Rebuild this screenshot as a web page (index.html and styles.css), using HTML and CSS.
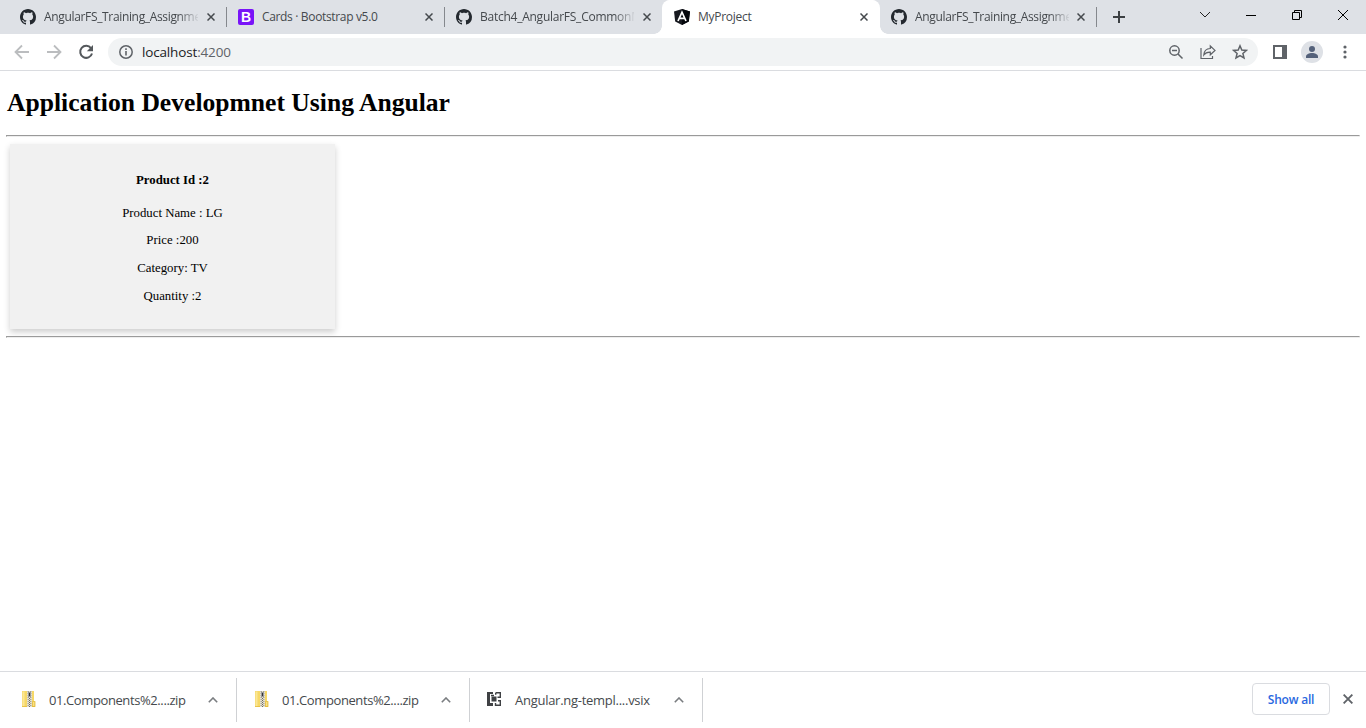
FILE: index.html
```html
<!DOCTYPE html>
<html lang="en">
<head>
<meta charset="utf-8">
<title>MyProject</title>
<link rel="stylesheet" href="styles.css">
</head>
<body>
<svg class="defs" width="0" height="0">
  <symbol id="github" viewBox="0 0 16 16"><path fill="#24292f" d="M8 0C3.58 0 0 3.58 0 8c0 3.54 2.29 6.53 5.47 7.59.4.07.55-.17.55-.38 0-.19-.01-.82-.01-1.49-2.01.37-2.53-.49-2.69-.94-.09-.23-.48-.94-.82-1.13-.28-.15-.68-.52-.01-.53.63-.01 1.08.58 1.23.82.72 1.21 1.87.87 2.33.66.07-.52.28-.87.51-1.07-1.78-.2-3.64-.89-3.64-3.95 0-.87.31-1.59.82-2.15-.08-.2-.36-1.02.08-2.12 0 0 .67-.21 2.2.82.64-.18 1.32-.27 2-.27s1.36.09 2 .27c1.53-1.04 2.2-.82 2.2-.82.44 1.1.16 1.92.08 2.12.51.56.82 1.27.82 2.15 0 3.07-1.87 3.75-3.65 3.95.29.25.54.73.54 1.48 0 1.07-.01 1.93-.01 2.2 0 .21.15.46.55.38A8.01 8.01 0 0 0 16 8c0-4.42-3.58-8-8-8z"/></symbol>
  <symbol id="close" viewBox="0 0 8 8"><path d="M.5.5l7 7M7.5.5l-7 7" fill="none" stroke="currentColor" stroke-width="1.5"/></symbol>
  <symbol id="caret" viewBox="0 0 10 6"><path d="M.8 5.2L5 1l4.200 4.200" fill="none" stroke="#7a7d80" stroke-width="1.6"/></symbol>
  <symbol id="zip" viewBox="0 0 14 16">
    <path d="M0 0h12v10h1.300v6H0z" fill="#f6d867"/><path d="M.5.5h2v15h-2z" fill="#fbe695"/>
    <path d="M10.500 10.500h2.300v5h-2.300z" fill="#fbe183" stroke="#e0b93e" stroke-width=".7"/>
    <path d="M0 15.600h13" stroke="#e2b93b" stroke-width=".8"/>
    <path d="M5 0h5v16H5z" fill="#e7e2cf"/><path d="M6.200 0v16M8.800 0v16" stroke="#8b897f" stroke-width="1" stroke-dasharray="1 1"/>
    <path d="M6 1h3v5H6z" fill="#9a9a9a"/><path d="M7 2h1v3H7z" fill="#333"/><path d="M7.500 7v9" stroke="#666" stroke-dasharray="1 1"/>
  </symbol>
</svg>

<header class="tabs">
  <div class="tab">
    <svg class="favicon"><use href="#github"/></svg><span class="title faded">AngularFS_Training_Assignme</span><svg class="close"><use href="#close"/></svg>
  </div>
  <div class="tab">
    <svg class="favicon" viewBox="0 0 16 16"><rect width="16" height="16" rx="2" fill="#7914f8"/><text x="8" y="13" class="letter">B</text></svg><span class="title">Cards · Bootstrap v5.0</span><svg class="close"><use href="#close"/></svg>
  </div>
  <div class="tab last-before">
    <svg class="favicon"><use href="#github"/></svg><span class="title faded batch">Batch4_AngularFS_CommonM</span><svg class="close"><use href="#close"/></svg>
  </div>
  <div class="tab active">
    <svg class="favicon" viewBox="0 0 16 16"><path d="M8 0l8 2.600-1.200 10L8 16l-6.800-3.400L0 2.600z" fill="#17191f"/><path d="M8 0l8 2.600-1.200 10L8 16z" fill="#05070c"/><path d="M4 12L8 3.200 12 12M5.800 9.300h4.400" fill="none" stroke="#fff" stroke-width="1.700"/></svg><span class="title project">MyProject</span><svg class="close"><use href="#close"/></svg>
  </div>
  <div class="tab fifth">
    <svg class="favicon"><use href="#github"/></svg><span class="title faded">AngularFS_Training_Assignme</span><svg class="close"><use href="#close"/></svg>
  </div>
  <svg class="plus" viewBox="0 0 12 12"><path d="M6 0v12M0 6h12" stroke="#3c4043" stroke-width="2"/></svg>
  <div class="window">
    <svg width="12" height="12" viewBox="0 0 12 12"><path d="M1 3l5 5 5-5" fill="none" stroke="#222"/></svg>
    <svg width="12" height="12" viewBox="0 0 12 12"><path d="M1 6.500h10" stroke="#000"/></svg>
    <svg width="12" height="12" viewBox="0 0 12 12"><path d="M1.500 3.500h7v7h-7zM3.500 3.500v-2h7v7h-2" fill="none" stroke="#000"/></svg>
    <svg width="12" height="12" viewBox="0 0 12 12"><path d="M1 1l10 10M11 1L1 11" stroke="#000"/></svg>
  </div>
</header>

<nav class="toolbar">
  <div class="nav">
    <svg width="16" height="16" viewBox="0 0 16 16"><path d="M15 8H2M8 1.500L1.500 8 8 14.500" fill="none" stroke="#bbbdbf" stroke-width="1.800"/></svg>
    <svg width="16" height="16" viewBox="0 0 16 16"><path d="M1 8h13M8 1.500L14.500 8 8 14.500" fill="none" stroke="#bbbdbf" stroke-width="1.800"/></svg>
    <svg width="16" height="16" viewBox="0 0 16 16"><path d="M13 4.200A6 6 0 1 0 14 9.500" fill="none" stroke="#54585c" stroke-width="2"/><path d="M15 1v6.200H8.800z" fill="#54585c"/></svg>
  </div>
  <div class="address">
    <svg width="14" height="14" viewBox="0 0 14 14"><circle cx="7" cy="7" r="6.200" fill="none" stroke="#5f6368" stroke-width="1.500"/><path d="M7 6v4.500M7 3.300v1.600" stroke="#5f6368" stroke-width="1.600"/></svg>
    <span class="url">localhost<span class="port">:4200</span></span>
    <div class="actions">
      <svg width="16" height="16" viewBox="0 0 16 16"><circle cx="6.500" cy="6.500" r="4.700" fill="none" stroke="#5f6368" stroke-width="1.500"/><path d="M4 6.500h5M10 10l4.500 4.500" fill="none" stroke="#5f6368" stroke-width="1.500"/></svg>
      <svg width="16" height="16" viewBox="0 0 16 16"><path d="M1 4v10.500h11.500V12M10.300 2v2.500C6 4.700 4 7 3.800 11c1.500-2.200 3.600-3 6.500-2.900v2.700L15 6.400z" fill="none" stroke="#5f6368" stroke-width="1.200"/></svg>
      <svg width="16" height="16" viewBox="0 0 16 16"><path d="M8 1.800l1.800 4.200 4.600.4-3.500 3 1.100 4.500L8 11.500l-4 2.400 1.100-4.500-3.500-3 4.600-.4z" fill="none" stroke="#5f6368" stroke-width="1.500"/></svg>
    </div>
  </div>
  <svg class="panel" width="14" height="14" viewBox="0 0 14 14"><path d="M1 1h12v12H1z" fill="#fff" stroke="#5f6368" stroke-width="2"/><path d="M9 0h5v14H9z" fill="#5f6368"/></svg>
  <svg class="avatar" width="22" height="22" viewBox="0 0 22 22"><circle cx="11" cy="11" r="11" fill="#dee1e6"/><circle cx="11" cy="8" r="3" fill="#54617a"/><path d="M5 17v-1.500c0-2.300 3-3.500 6-3.500s6 1.200 6 3.500V17z" fill="#54617a"/></svg>
  <svg width="4" height="14" viewBox="0 0 4 14"><g fill="#5f6368"><circle cx="2" cy="2" r="1.600"/><circle cx="2" cy="7" r="1.600"/><circle cx="2" cy="12" r="1.600"/></g></svg>
</nav>

<main class="page">
  <h1>Application Developmnet Using Angular</h1>
  <hr>
  <section class="card">
    <h3>Product Id :2</h3>
    <p>Product Name : LG</p>
    <p>Price :200</p>
    <p>Category: TV</p>
    <p>Quantity :2</p>
  </section>
  <hr>
</main>

<footer class="shelf">
  <div class="download"><svg class="file"><use href="#zip"/></svg><span class="name">01.Components%2....zip</span><svg class="caret"><use href="#caret"/></svg></div>
  <div class="download"><svg class="file"><use href="#zip"/></svg><span class="name">01.Components%2....zip</span><svg class="caret"><use href="#caret"/></svg></div>
  <div class="download third"><svg class="file vsix" viewBox="0 0 14 14"><path d="M0 0h6v2H3v9h3v3H0zM4.500 4.500h5v5h-5z" fill="#3f4144"/><path d="M4 3.500h3M8.700.7h4.600v4.600h-2.800M8.700.7v2M11 8.700h2.300v4.600H8.500V11" fill="none" stroke="#3f4144" stroke-width="1.400"/></svg><span class="name vname">Angular.ng-templ....vsix</span><svg class="caret"><use href="#caret"/></svg></div>
  <div class="end"><button class="show">Show all</button><svg class="dismiss"><use href="#close"/></svg></div>
</footer>
</body>
</html>
```
FILE: styles.css
```css
* { box-sizing: border-box; }
body { margin: 0; height: 728px; overflow: hidden; display: flex; flex-direction: column; background: #fff; font-family: "Open Sans", "Noto Sans", sans-serif; }
svg { display: block; flex: none; }
.defs { position: absolute; }

.tabs { height: 34px; flex: none; display: flex; align-items: center; padding-left: 8px; background: #dee1e6; }
.tab { position: relative; width: 218px; height: 34px; flex: none; display: flex; align-items: center; padding-left: 12px; color: #45494d; }
.tab::after { content: ""; position: absolute; right: -1px; top: 7px; width: 1px; height: 20px; background: #85888d; }
.last-before::after, .active::after { display: none; }
.fifth { width: 217px; }
.active { width: 217px; background: #fff; border-radius: 8px 8px 0 0; box-shadow: 1px 0 #fff; }
.last-before::before, .fifth::before { content: ""; position: absolute; bottom: 0; width: 8px; height: 8px; }
.last-before::before { right: 0; background: radial-gradient(circle at 0 0, transparent 7.5px, #fff 8px); }
.fifth::before { left: 1px; background: radial-gradient(circle at 100% 0, transparent 7.5px, #fff 8px); }
.favicon { width: 16px; height: 16px; }
.letter { font: bold 14px "Liberation Sans", sans-serif; fill: #fff; text-anchor: middle; }
.title { width: 154px; margin-left: 8px; white-space: nowrap; font-size: 12px; line-height: 18px; letter-spacing: -0.34px; }
.batch { letter-spacing: -0.25px; }
.project { letter-spacing: -0.28px; }
.faded { -webkit-mask-image: linear-gradient(90deg, #000 134px, transparent 156px); mask-image: linear-gradient(90deg, #000 134px, transparent 156px); }
.close { width: 8px; height: 8px; margin-left: 9px; color: #45494d; }
.active .close, .fifth .close { margin-left: 8px; }
.plus { width: 12px; height: 12px; margin-left: 17px; }
.window { display: flex; gap: 34px; margin-left: auto; margin-right: 17px; padding-bottom: 5px; }

.toolbar { height: 37px; flex: none; display: flex; align-items: center; padding: 0 20px 1px 14px; border-bottom: 1px solid #dadce0; }
.nav { display: flex; gap: 16px; }
.address { width: 1150px; flex: none; height: 28px; margin-left: 14px; margin-right: 15px; padding: 0 10px 0 11px; display: flex; align-items: center; border-radius: 14px; background: #f1f3f4; }
.url { margin-left: 9px; font-size: 13.5px; line-height: 20px; letter-spacing: -0.16px; color: #202124; }
.port { color: #5f6368; }
.actions { display: flex; gap: 16px; margin-left: auto; }
.avatar { margin-left: 14px; margin-right: 20px; }

.page { flex: 1; padding: 0 6.400px; font-family: "Liberation Serif", serif; font-size: 12.800px; color: #000; }
h1 { margin: 17px 0; padding-left: .6px; font-size: 25.600px; line-height: 30px; font-weight: bold; }
hr { margin: 0; border: 1px solid; border-color: #9a9a9a #eee #eee #9a9a9a; }
.card { width: 325px; height: 185px; margin: 7px 0 7px 3.600px; padding: 29px 16px; background: #f1f1f1; text-align: center; box-shadow: 0 3.200px 6.400px rgba(0,0,0,.2); }
.card h3 { margin: 0; font-size: 12.800px; line-height: 15px; }
.card p { margin: 12.800px 0 0; line-height: 15px; }
.card h3 + p { margin-top: 17.600px; }

.shelf { height: 57px; flex: none; display: flex; align-items: flex-start; padding-top: 6px; border-top: 1px solid #dadce0; }
.download { width: 233px; height: 44px; flex: none; display: flex; align-items: center; padding-left: 18px; border-right: 1px solid #cfd1d4; }
.download:first-child { width: 237px; padding-left: 22px; }
.third { padding-left: 17px; }
.file { width: 14px; height: 16px; margin-bottom: 2px; }
.name { width: 151px; margin-left: 13px; white-space: nowrap; font-size: 13px; line-height: 20px; letter-spacing: -0.4px; color: #45494d; }
.vsix { height: 14px; }
.vname { margin-left: 14px; width: 151px; letter-spacing: -0.27px; }
.caret { width: 10px; height: 6px; margin-left: 8px; }
.end { display: flex; align-items: center; margin-left: auto; padding: 5px 13px 0 0; }
.show { width: 78px; height: 32px; padding: 0; border: 1px solid #dadce0; border-radius: 4px; background: #fff; color: #2a68e0; font: 600 12px "Open Sans", sans-serif; letter-spacing: -0.2px; }
.dismiss { width: 10px; height: 10px; margin-left: 13px; color: #5f6368; }
```
